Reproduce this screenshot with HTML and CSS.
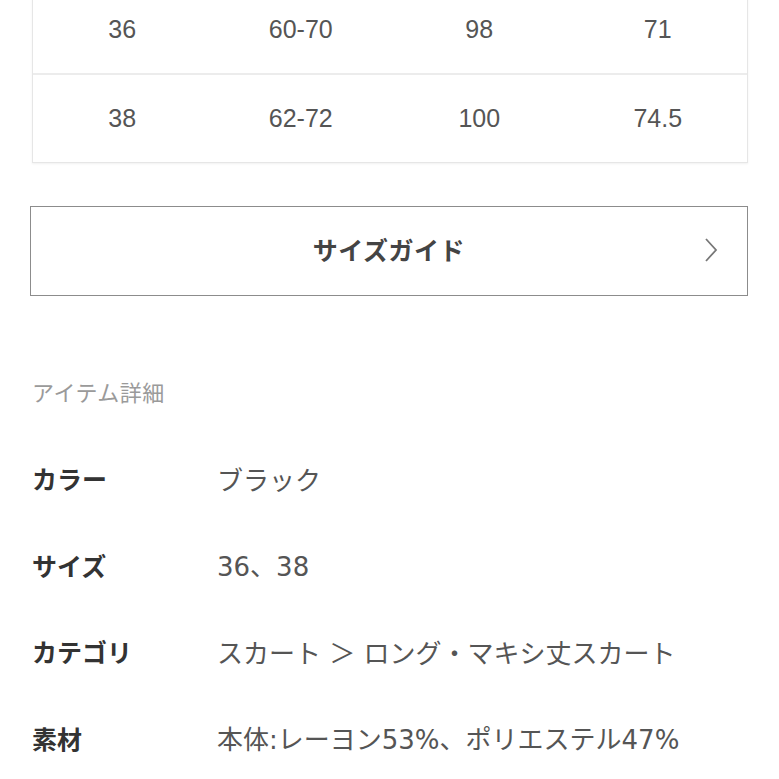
FILE: index.html
```html
<!DOCTYPE html>
<html lang="ja">
<head>
<meta charset="utf-8">
<link rel="stylesheet" href="styles.css">
</head>
<body>
<div class="page">
  <div class="size-table">
    <div class="row">
      <div class="cell">36</div>
      <div class="cell">60-70</div>
      <div class="cell">98</div>
      <div class="cell">71</div>
    </div>
    <div class="row">
      <div class="cell">38</div>
      <div class="cell">62-72</div>
      <div class="cell">100</div>
      <div class="cell">74.5</div>
    </div>
  </div>

  <div class="guide-btn">
    <span class="guide-label">サイズガイド</span>
    <svg class="chevron" width="14" height="26" viewBox="0 0 14 26"><path d="M2 2 L12 13 L2 24" fill="none" stroke="#777" stroke-width="1.8"/></svg>
  </div>

  <div class="section-title">アイテム詳細</div>

  <div class="details">
    <div class="d-label">カラー</div><div class="d-value">ブラック</div>
    <div class="d-label">サイズ</div><div class="d-value">36、38</div>
    <div class="d-label">カテゴリ</div><div class="d-value">スカート ＞ ロング・マキシ丈スカート</div>
    <div class="d-label">素材</div><div class="d-value">本体:レーヨン53%、ポリエステル47%</div>
  </div>
</div>
</body>
</html>
```
FILE: styles.css
```css
html, body {
  margin: 0;
  padding: 0;
  background: #fff;
}
body {
  font-family: "Liberation Sans", "Noto Sans CJK JP", sans-serif;
  color: #444;
  overflow: hidden;
}
.page {
  padding: 0 31px 0 30px;
}
.size-table {
  margin: -14px 0 0 2px;
  border: 1px solid #e6e6e6;
  border-top: none;
  box-shadow: 0 1px 2px rgba(0,0,0,0.06);
}
.row {
  display: grid;
  grid-template-columns: repeat(4, 1fr);
  height: 87px;
  align-items: center;
}
.row + .row {
  border-top: 2px solid #ececec;
}
.cell {
  text-align: center;
  font-size: 25px;
  color: #555;
}
.guide-btn {
  margin-top: 43px;
  height: 88px;
  border: 1.5px solid #8c8c8c;
  display: flex;
  align-items: center;
  justify-content: center;
  position: relative;
}
.guide-label {
  font-family: "Noto Sans CJK JP", sans-serif;
  font-weight: bold;
  font-size: 25px;
  line-height: 30px;
  color: #444;
  letter-spacing: 0.5px;
  margin-top: -4px;
}
.chevron {
  position: absolute;
  right: 29px;
  top: 30px;
}
.section-title {
  margin-top: 78px;
  margin-left: 2px;
  font-family: "Noto Sans CJK JP", sans-serif;
  font-size: 22px;
  letter-spacing: 0.5px;
  line-height: 34px;
  color: #9a9a9a;
}
.details {
  margin-top: 27px;
  margin-left: 2px;
  display: grid;
  grid-template-columns: 185px 1fr;
  grid-auto-rows: 86.5px;
  align-items: center;
}
.d-label {
  font-family: "Noto Sans CJK JP", sans-serif;
  font-weight: bold;
  font-size: 25px;
  color: #333;
}
.d-value {
  font-family: "DejaVu Sans", "Noto Sans CJK JP", sans-serif;
  font-size: 26px;
  color: #555;
  white-space: nowrap;
}
```
